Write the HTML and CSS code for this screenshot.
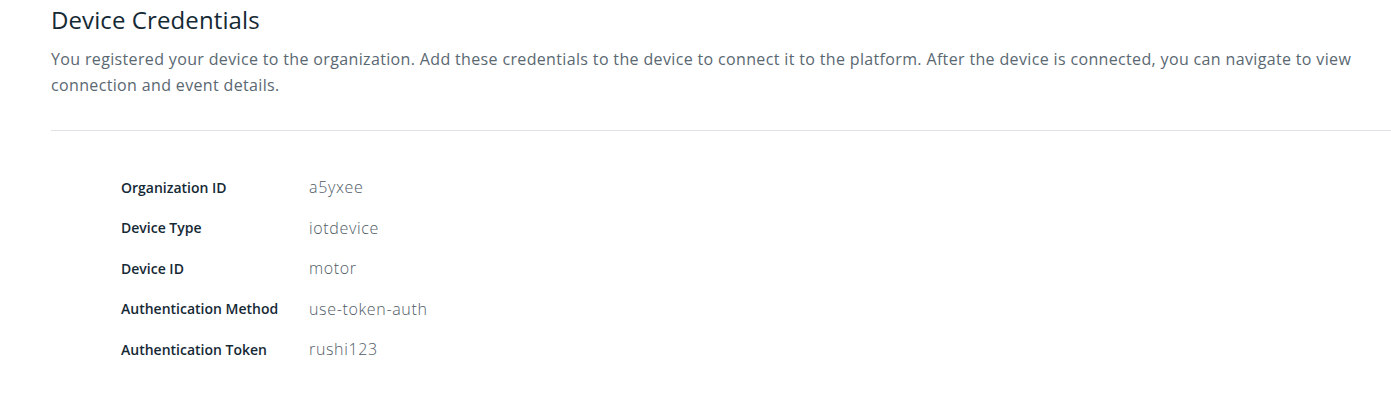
FILE: index.html
```html
<!DOCTYPE html>
<html lang="en">
<head>
<meta charset="utf-8">
<title>Device Credentials</title>
<link rel="stylesheet" href="styles.css">
</head>
<body>
<main class="page">
  <header class="intro">
    <h1 class="title">Device Credentials</h1>
    <p class="desc">You registered your device to the organization. Add these credentials to the device to connect it to the platform. After the device is connected, you can navigate to view connection and event details.</p>
  </header>
  <hr class="divider">
  <dl class="creds">
    <div class="row"><dt class="label">Organization ID</dt><dd class="value">a5yxee</dd></div>
    <div class="row"><dt class="label">Device Type</dt><dd class="value">iotdevice</dd></div>
    <div class="row"><dt class="label">Device ID</dt><dd class="value">motor</dd></div>
    <div class="row"><dt class="label">Authentication Method</dt><dd class="value">use-token-auth</dd></div>
    <div class="row"><dt class="label">Authentication Token</dt><dd class="value">rushi123</dd></div>
  </dl>
</main>
</body>
</html>
```
FILE: styles.css
```css
html, body {
  margin: 0;
  padding: 0;
  background: #ffffff;
}
body {
  font-family: "Open Sans", "Liberation Sans", sans-serif;
  overflow: hidden;
}
.page {
  padding-left: 51px;
}
.intro {
  padding-top: 4px;
}
.title {
  margin: 0;
  font-size: 24px;
  line-height: 32px;
  font-weight: 400;
  color: #152935;
  letter-spacing: 0.1px;
}
.desc {
  margin: 10px 0 0 0;
  font-size: 16px;
  line-height: 26px;
  font-weight: 400;
  color: #5a6872;
  letter-spacing: 0.35px;
}
.divider {
  margin: 32px 0 0 0;
  border: 0;
  border-top: 1px solid #dfe3e6;
  height: 0;
}
.creds {
  margin: 36px 0 0 70px;
  padding: 0;
}
.row {
  display: grid;
  grid-template-columns: 188px auto;
  align-items: center;
  height: 40.5px;
}
.label {
  margin: 0;
  font-size: 14px;
  font-weight: 600;
  color: #152935;
}
.value {
  margin: 0;
  font-size: 16px;
  font-weight: 300;
  color: #4f5b66;
  letter-spacing: 0.65px;
}
```
